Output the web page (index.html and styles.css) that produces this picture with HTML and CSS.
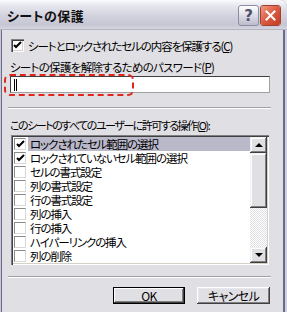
FILE: index.html
```html
<!DOCTYPE html>
<html lang="ja">
<head>
    <meta charset="UTF-8">
    <title>シートの保護</title>
    <link rel="stylesheet" href="styles.css">
</head>
<body>
    <div class="window">
        <div class="titlebar">
            <span class="title">シートの保護</span>
            <div class="title-btns">
                <div class="tbtn help">?</div>
                <div class="tbtn close">
                    <svg width="11" height="11" viewBox="0 0 11 11"><path d="M1.5 1.5 L9.5 9.5 M9.5 1.5 L1.5 9.5" stroke="#fff" stroke-width="2" stroke-linecap="square"/></svg>
                </div>
            </div>
        </div>

        <div class="client">
            <label class="check-row">
                <span class="checkbox">
                    <svg width="9" height="9" viewBox="0 0 9 9"><path d="M1 4 L3 6 L8 1" stroke="#000" stroke-width="2" fill="none"/></svg>
                </span>
                <span>シートとロックされたセルの内容を保護する(<u>C</u>)</span>
            </label>

            <div class="label pw-label">シートの保護を解除するためのパスワード(<u>P</u>)</div>
            <div class="pw-wrap">
                <div class="input"><span class="caret"></span></div>
                <div class="mark"></div>
            </div>

            <div class="sep"></div>

            <div class="label list-label">このシートのすべてのユーザーに許可する操作(<u>O</u>):</div>
            <div class="listbox">
                <div class="items">
                    <div class="item">
                        <span class="lcheck"><svg width="9" height="9" viewBox="0 0 9 9"><path d="M1 4 L3 6 L8 1" stroke="#000" stroke-width="2" fill="none"/></svg></span>
                        <span class="itext selected">ロックされたセル範囲の選択</span>
                    </div>
                    <div class="item">
                        <span class="lcheck"><svg width="9" height="9" viewBox="0 0 9 9"><path d="M1 4 L3 6 L8 1" stroke="#000" stroke-width="2" fill="none"/></svg></span>
                        <span class="itext">ロックされていないセル範囲の選択</span>
                    </div>
                    <div class="item"><span class="lcheck"></span><span class="itext">セルの書式設定</span></div>
                    <div class="item"><span class="lcheck"></span><span class="itext">列の書式設定</span></div>
                    <div class="item"><span class="lcheck"></span><span class="itext">行の書式設定</span></div>
                    <div class="item"><span class="lcheck"></span><span class="itext">列の挿入</span></div>
                    <div class="item"><span class="lcheck"></span><span class="itext">行の挿入</span></div>
                    <div class="item"><span class="lcheck"></span><span class="itext">ハイパーリンクの挿入</span></div>
                    <div class="item"><span class="lcheck"></span><span class="itext">列の削除</span></div>
                </div>
                <div class="scrollbar">
                    <div class="sbtn"><span class="arrow up"></span></div>
                    <div class="thumb"></div>
                    <div class="track"></div>
                    <div class="sbtn"><span class="arrow down"></span></div>
                </div>
            </div>

            <div class="sep sep-bottom"></div>

            <div class="buttons">
                <button class="btn default">OK</button>
                <button class="btn">キャンセル</button>
            </div>
        </div>
    </div>
</body>
</html>
```

FILE: styles.css
```css
* {
    margin: 0;
    padding: 0;
    box-sizing: border-box;
}

body {
    background: #f4f4f6;
    font-family: "Noto Sans CJK JP", "Noto Sans", sans-serif;
    font-size: 11.5px;
    letter-spacing: -1.1px;
    font-feature-settings: "palt";
    color: #000;
    width: 287px;
    height: 312px;
    overflow: hidden;
}

.window {
    width: 287px;
    height: 312px;
    background: #e0dfe3;
    border-top-right-radius: 7px;
    overflow: hidden;
    box-shadow: inset 1px 0 #c8c8d4, inset 2px 0 #6a6a8c,
                inset -2px 0 #d0d0dc, inset -4px 0 #6a6a8c;
}

/* title bar */
.titlebar {
    height: 30px;
    display: flex;
    align-items: center;
    padding-left: 7px;
    background: linear-gradient(#fbfbfd 0%, #e6e6ee 20%, #d2d2de 55%, #c6c6d4 85%, #d6d6e0 100%);
    border-bottom: 1px solid #b4b4c4;
}

.title {
    font-weight: bold;
    font-size: 13px;
    color: #111;
    letter-spacing: 0.5px;
    margin-top: 2px;
}

.title-btns {
    margin-left: auto;
    display: flex;
    gap: 1px;
    padding-right: 6px;
    margin-top: 2px;
}

.tbtn {
    width: 21px;
    height: 21px;
    border-radius: 3px;
    display: flex;
    align-items: center;
    justify-content: center;
}

.help {
    border: 1px solid #8c8ca4;
    background: linear-gradient(#ffffff, #dcdce6 50%, #bcbccc);
    color: #50506a;
    font-family: "DejaVu Sans", sans-serif;
    font-weight: bold;
    font-size: 15px;
    letter-spacing: 0;
}

.close {
    border: 1px solid #fff;
    outline: 1px solid #a04030;
    outline-offset: -1px;
    background: linear-gradient(135deg, #f09a84, #dc5a40 50%, #c03a22);
}

/* client area */
.client {
    padding: 9px 17px 0 10px;
    display: flex;
    flex-direction: column;
}

.check-row {
    display: flex;
    align-items: center;
    height: 13px;
    gap: 4px;
    padding-left: 1px;
}

.checkbox {
    width: 13px;
    height: 13px;
    background: #fff;
    display: flex;
    align-items: center;
    justify-content: center;
    box-shadow: inset 1px 1px #808080, inset 2px 2px #404040,
                inset -1px -1px #fff, inset -2px -2px #d4d0c8;
}

.label {
    height: 14px;
    line-height: 14px;
    white-space: nowrap;
}

.pw-label {
    margin-top: 8px;
    letter-spacing: -0.7px;
}

.pw-wrap {
    position: relative;
    margin-top: 2px;
}

.input {
    height: 17px;
    background: #fff;
    border: 1px solid #1c1c1c;
    border-color: #404040 #a0a0a0 #a0a0a0 #404040;
    position: relative;
}

.caret {
    position: absolute;
    left: 3px;
    top: 2px;
    width: 3px;
    height: 12px;
    border-left: 1px solid #000;
    border-right: 1px solid #000;
}

.mark {
    position: absolute;
    left: -6px;
    top: -2px;
    width: 130px;
    height: 22px;
    border: 2px dashed #e2261c;
    border-radius: 6px;
}

.sep {
    height: 2px;
    margin: 14px -1px 0 -2px;
    border-top: 1px solid #a0a0a8;
    border-bottom: 1px solid #fff;
}

.list-label {
    margin-top: 9px;
    font-size: 11px;
    letter-spacing: -1.5px;
}

.listbox {
    margin: 3px 1px 0 1px;
    height: 130px;
    display: flex;
    background: #fff;
    box-shadow: inset 1px 1px #808080, inset 2px 2px #404040,
                inset -1px -1px #fff, inset -2px -2px #d4d0c8;
    padding: 2px;
}

.items {
    flex: 1;
    display: flex;
    flex-direction: column;
}

.item {
    height: 14px;
    display: flex;
    align-items: center;
    padding-left: 1px;
}

.lcheck {
    width: 12px;
    height: 12px;
    border: 1px solid;
    border-color: #8a8a8a #d8d8d8 #d8d8d8 #8a8a8a;
    background: #fff;
    display: flex;
    align-items: center;
    justify-content: center;
    flex-shrink: 0;
}

.itext {
    flex: 1;
    height: 14px;
    line-height: 14px;
    margin-left: 2px;
    padding-left: 2px;
    white-space: nowrap;
}

.itext.selected {
    background: #bab9ca;
}

.scrollbar {
    width: 17px;
    display: flex;
    flex-direction: column;
}

.sbtn,
.thumb {
    background: #e0dfe3;
    box-shadow: inset -1px -1px #404040, inset 1px 1px #f0f0f0,
                inset -2px -2px #808080, inset 2px 2px #fff;
}

.sbtn {
    height: 16px;
    display: flex;
    align-items: center;
    justify-content: center;
}

.thumb {
    height: 55px;
}

.track {
    flex: 1;
    background: repeating-conic-gradient(#fff 0 25%, #e0dfe3 0 50%) 0 0 / 2px 2px;
}

.arrow {
    width: 0;
    height: 0;
    border-left: 4px solid transparent;
    border-right: 4px solid transparent;
}

.arrow.up {
    border-bottom: 4px solid #000;
}

.arrow.down {
    border-top: 4px solid #000;
}

.sep-bottom {
    margin-top: 11px;
}

.buttons {
    display: flex;
    justify-content: flex-end;
    gap: 12px;
    margin-top: 9px;
}

.btn {
    height: 17px;
    width: 73px;
    font-family: inherit;
    font-size: 12px;
    letter-spacing: -0.6px;
    font-feature-settings: "palt";
    line-height: 13px;
    background: #e0dfe3;
    border: none;
    box-shadow: inset -1px -1px #404040, inset 1px 1px #fff,
                inset -2px -2px #808080, inset 2px 2px #e8e8ec;
}

.btn.default {
    width: 72px;
    box-shadow: inset 0 0 0 1px #000, inset -2px -2px #404040, inset 2px 2px #fff,
                inset -3px -3px #808080;
}
```
